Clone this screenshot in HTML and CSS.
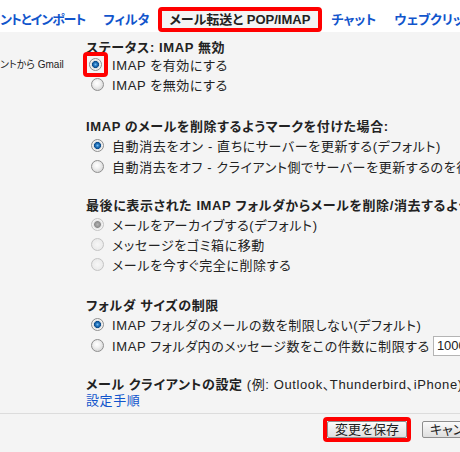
FILE: index.html
```html
<!DOCTYPE html>
<html lang="ja">
<head>
  <meta charset="UTF-8" />
  <title>メール転送と POP/IMAP</title>
  <link rel="stylesheet" href="styles.css">
</head>
<body>
<div class="tabs">
  <a class="tab first" href="#">ントとインポート</a>
  <a class="tab" href="#">フィルタ</a>
  <span class="tab current">メール転送と POP/IMAP</span>
  <a class="tab" href="#">チャット</a>
  <a class="tab" href="#">ウェブクリップ</a>
</div>

<div class="settings">
  <div class="label-col">
    <div class="note">ントから Gmail</div>
  </div>
  <div class="main-col">
    <div class="section status">
      <h3>ステータス: IMAP 無効</h3>
      <label class="option"><span class="mark"><input type="radio" class="radio" name="imap" checked /></span>IMAP を有効にする</label>
      <label class="option"><input type="radio" class="radio" name="imap" />IMAP を無効にする</label>
    </div>

    <div class="section">
      <h3>IMAP のメールを削除するようマークを付けた場合:</h3>
      <label class="option"><input type="radio" class="radio" name="expunge" checked />自動消去をオン - 直ちにサーバーを更新する(デフォルト)</label>
      <label class="option"><input type="radio" class="radio" name="expunge" />自動消去をオフ - クライアント側でサーバーを更新するのを待つ</label>
    </div>

    <div class="section compact">
      <h3>最後に表示された IMAP フォルダからメールを削除/消去するように指定した場合:</h3>
      <label class="option"><input type="radio" class="radio" name="delete" checked disabled />メールをアーカイブする(デフォルト)</label>
      <label class="option"><input type="radio" class="radio" name="delete" disabled />メッセージをゴミ箱に移動</label>
      <label class="option"><input type="radio" class="radio" name="delete" disabled />メールを今すぐ完全に削除する</label>
    </div>

    <div class="section">
      <h3>フォルダ サイズの制限</h3>
      <label class="option"><input type="radio" class="radio" name="limit" checked />IMAP フォルダのメールの数を制限しない(デフォルト)</label>
      <label class="option"><input type="radio" class="radio" name="limit" />IMAP フォルダ内のメッセージ数をこの件数に制限する<input type="text" class="count" value="1000" /></label>
    </div>

    <div class="section last">
      <h3>メール クライアントの設定 <span class="plain">(例: Outlook、Thunderbird、iPhone)</span></h3>
      <a class="guide" href="#">設定手順</a>
    </div>
  </div>
</div>

<div class="actions">
  <span class="mark"><button class="btn">変更を保存</button></span>
  <button class="btn">キャンセル</button>
</div>
</body>
</html>
```

FILE: styles.css
```css
html, body {
  overflow: hidden;
}
body {
  margin: 0;
  width: 460px;
  height: 452px;
  background: #f4f4f4;
  color: #222;
  font-family: "Liberation Sans", "Noto Sans CJK JP", sans-serif;
  font-size: 13px;
  font-feature-settings: "palt";
}
.tabs {
  display: flex;
  height: 32px;
  background: #fff;
  white-space: nowrap;
}
.tab {
  flex-shrink: 0;
  margin-top: 7px;
  padding: 4px 9px;
  line-height: 18px;
  font-weight: bold;
  color: #15c;
  text-decoration: none;
}
.tab.first {
  margin-left: -9px;
  letter-spacing: -1px;
}
.tab.current {
  padding: 0 8px 0 7px;
  border: 4px solid #f00;
  border-radius: 4px;
  background: #f4f4f4;
  color: #222;
}
.settings {
  display: flex;
  padding-top: 8px;
}
.label-col {
  width: 86px;
  flex-shrink: 0;
}
.note {
  padding-top: 17px;
  font-size: 10px;
  line-height: 16px;
  white-space: nowrap;
}
.main-col {
  flex: 1;
  min-width: 0;
  white-space: nowrap;
  letter-spacing: 0.6px;
}
.section {
  margin-bottom: 21px;
}
.section.status {
  margin-bottom: 25px;
}
.section.status h3 {
  margin-bottom: -2px;
}
.section.compact {
  margin-bottom: 24px;
}
.section.last {
  margin-bottom: 4px;
}
h3 {
  margin: 0;
  font-size: 13px;
  line-height: 16px;
  font-weight: bold;
}
h3 .plain {
  font-weight: normal;
}
.option {
  display: flex;
  align-items: center;
  gap: 8px;
  height: 21px;
}
.status .option,
.compact .option {
  height: 20px;
}
.radio {
  appearance: none;
  flex-shrink: 0;
  width: 13px;
  height: 13px;
  margin: 0 0 0 5px;
  border: 1px solid #8f8f8f;
  border-radius: 50%;
  background: radial-gradient(circle at 45% 40%, #fff 0, #f2f2f2 3px, #d6d6d6 7px);
}
.radio:checked {
  background: radial-gradient(circle, #7cc0f2 0, #2a7cc4 1.5px, #0c4c8c 3.2px, #dcdcdc 3.8px, #f4f4f4 5px, #d4d4d4 7px);
}
.radio:disabled {
  border-color: #c4c4c4;
  background: radial-gradient(circle, #f7f7f7 0, #e6e6e6 7px);
}
.radio:checked:disabled {
  background: radial-gradient(circle, #b4b4b4 0, #8c8c8c 3px, #e4e4e4 3.8px, #f4f4f4 5px, #e2e2e2 7px);
}
.mark {
  display: inline-flex;
  flex-shrink: 0;
  border: 4px solid #f00;
  border-radius: 4px;
}
.option .mark {
  padding: 2px;
  margin: -2px -4px -2px -3px;
}
.option .mark .radio {
  margin: 0;
}
.count {
  flex-shrink: 0;
  width: 60px;
  height: 20px;
  box-sizing: border-box;
  margin-left: -5px;
  padding: 0 3px;
  border: 1px solid #b4b4b4;
  background: #fff;
  font: inherit;
  letter-spacing: 0;
  color: #222;
}
.guide {
  display: block;
  line-height: 16px;
  color: #15c;
  text-decoration: none;
}
.actions {
  display: flex;
  align-items: center;
  gap: 11px;
  padding: 3px 0 0 323px;
  border-top: 1px solid #dcdcdc;
  white-space: nowrap;
}
.btn {
  flex-shrink: 0;
  height: 17px;
  padding: 0 7px;
  border: 1px solid #8e8e8e;
  border-radius: 2px;
  background: linear-gradient(#fbfbfb, #dedede);
  font: inherit;
  line-height: 15px;
  color: #222;
}
```
